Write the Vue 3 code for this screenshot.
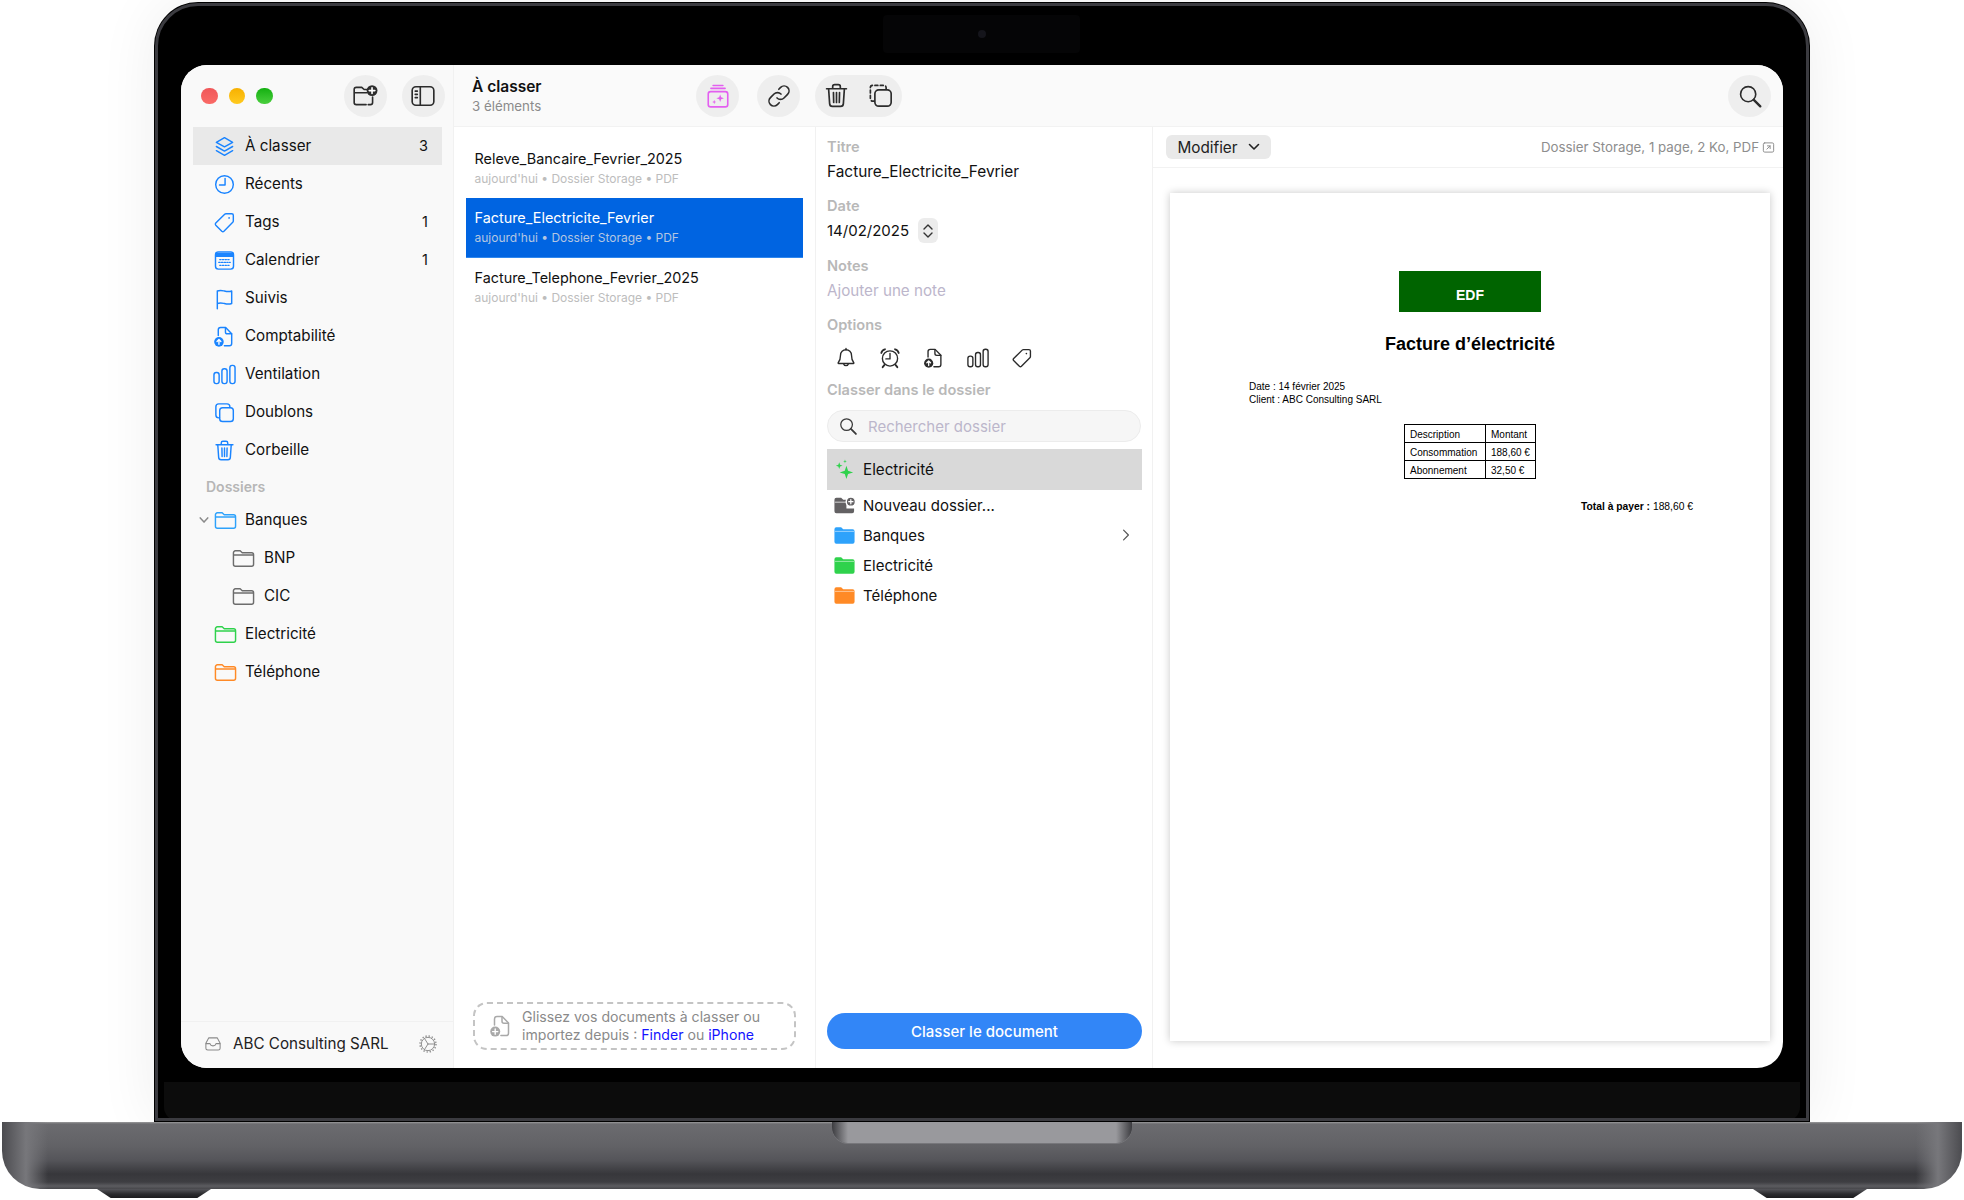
<script setup>
const icons = {
  stack: '<path d="M12 2.8 3.5 7.6l8.5 4.8 8.5-4.8z"/><path d="M3.5 12l8.5 4.8 8.5-4.8"/><path d="M3.5 16.4l8.5 4.8 8.5-4.8"/>',
  clock: '<circle cx="12" cy="12" r="9.2"/><path d="M12.6 5.6v6.9H6.8"/>',
  tag: '<path d="M13.6 2.8h6a1.6 1.6 0 0 1 1.6 1.6v6a2 2 0 0 1-.6 1.4l-9.2 9.3a1.6 1.6 0 0 1-2.2 0l-6.3-6.3a1.6 1.6 0 0 1 0-2.2l9.3-9.2a2 2 0 0 1 1.4-.6z"/><circle cx="16.8" cy="7.2" r=".9" fill="currentColor" stroke="none"/>',
  calendar: '<rect x="2.6" y="3" width="18.8" height="18" rx="3"/><path d="M3 4.5h18v3.2H3z" fill="currentColor"/><path d="M7 11h10M6 14h12M7 17h10" stroke-dasharray="1.4 1.4" stroke-width="1.3"/>',
  flag: '<path d="M4.5 22.6V4.2c3.2-1.2 5.2-.5 7.4 0 2.6.7 5 .9 7.6 0v13c-2.6.9-5 .7-7.6 0-2.2-.5-4.2-1.2-7.4 0"/>',
  docup: '<path d="M5.5 11V5a2.4 2.4 0 0 1 2.4-2.4h5.3l6.3 6.5v10.1a2.4 2.4 0 0 1-2.4 2.4h-5.2"/><path d="M13 2.8v4.4a2 2 0 0 0 2 2h4.4"/><circle cx="6.2" cy="17.6" r="5" fill="currentColor" stroke="none"/><path d="M6.2 20.2v-4.8M4.2 17.2l2-2 2 2" stroke="#fff" stroke-width="1.4"/>',
  bars: '<rect x="1" y="10" width="5.4" height="11.5" rx="2.4"/><rect x="9.3" y="6" width="5.4" height="15.5" rx="2.4"/><rect x="17.6" y="2.5" width="5.4" height="19" rx="2.4"/>',
  copies: '<path d="M6.8 17.6H6a3 3 0 0 1-3-3V6a3 3 0 0 1 3-3h8.6a3 3 0 0 1 3 3v.8"/><rect x="7" y="7" width="14.2" height="14.4" rx="3"/>',
  trash: '<path d="M3.2 6h17.6M8.6 5.6V4.2a1.8 1.8 0 0 1 1.8-1.8h3.2a1.8 1.8 0 0 1 1.8 1.8v1.4"/><path d="M5 6.2l.9 13a2.5 2.5 0 0 0 2.5 2.4h7.2a2.5 2.5 0 0 0 2.5-2.4l.9-13"/><path d="M9.3 9.4l.2 8.8M12 9.4v8.8M14.7 9.4l-.2 8.8"/>',
  folder: '<path d="M1.5 6a2 2 0 0 1 2-2h5l2.2 2h9.8a2 2 0 0 1 2 2v10a2 2 0 0 1-2 2h-17a2 2 0 0 1-2-2z"/><path d="M2 8.4h20"/>',
  folderFill: '<path d="M1.5 5.5a2 2 0 0 1 2-2h5l2.2 2h9.8a2 2 0 0 1 2 2v11a2 2 0 0 1-2 2h-17a2 2 0 0 1-2-2z" fill="currentColor" stroke="none"/><path d="M2.5 7.7h19" stroke="#fff" stroke-opacity=".55" stroke-width="1"/>',
  folderPlus: '<path d="M13 20H4a2 2 0 0 1-2-2V6a2 2 0 0 1 2-2h5l2.2 2H14M19 13v5a2 2 0 0 1-2 2h-2"/><path d="M2.5 9h11"/><circle cx="18.5" cy="7" r="5" fill="currentColor" stroke="none"/><path d="M18.5 4.4v5.2M15.9 7h5.2" stroke="#fff" stroke-width="1.5"/>',
  folderPlusFill: '<path d="M1.5 6a2 2 0 0 1 2-2h5l2.2 2H14v9h8v3a2 2 0 0 1-2 2H3.5a2 2 0 0 1-2-2z" fill="currentColor" stroke="none"/><path d="M2.5 8.600h11" stroke="#fff" stroke-opacity=".5"/><circle cx="18.6" cy="8" r="4.8" fill="currentColor" stroke="#fff"/><path d="M18.6 5.800v4.400M16.400 8h4.400" stroke="#fff" stroke-width="1.3"/>',
  panel: '<rect x="2" y="3.5" width="20" height="17" rx="3.5"/><path d="M9.5 3.5v17"/><path d="M4.8 7.5h2M4.8 10.5h2M4.8 13.5h2" stroke-width="1.4"/>',
  inbox: '<path d="M6.4 3.8h11.2L21.5 11v6.5a2.5 2.5 0 0 1-2.5 2.5H5a2.5 2.5 0 0 1-2.5-2.5V11z"/><path d="M2.8 11.5H8c.5 2 2 3 4 3s3.5-1 4-3h5.2"/>',
  gear: '<circle cx="12" cy="12" r="8"/><circle cx="12" cy="12" r="9.6" stroke-width="1.8" stroke-linecap="butt" stroke-dasharray="1.6 2.2"/><path d="M12 12 8 5.7M12 12l-4 6.300M12 12h8"/>',
  search: '<circle cx="10.3" cy="10.3" r="7"/><path d="M15.5 15.5l6 6" stroke-width="2.2"/>',
  link: '<path d="M10.2 13.8a4.5 4.5 0 0 0 6.4 0l3.3-3.3a4.5 4.5 0 0 0-6.4-6.4l-1.7 1.7"/><path d="M13.8 10.2a4.5 4.5 0 0 0-6.4 0l-3.3 3.3a4.5 4.5 0 0 0 6.4 6.4l1.7-1.7"/>',
  dup: '<path d="M6.5 17H5a2 2 0 0 1-2-2V5a2 2 0 0 1 2-2h10a2 2 0 0 1 2 2v1.500" stroke-dasharray="2.6 2.2"/><rect x="7" y="7" width="14.5" height="14.5" rx="3.5"/>',
  magic: '<rect x="3" y="8" width="18" height="14" rx="2.2"/><path d="M5.5 5h13M7.5 2.3h9"/><path d="M14 10.5l.9 2.6 2.6.9-2.6.9-.9 2.6-.9-2.6-2.6-.9 2.6-.9z" fill="currentColor" stroke="none"/><path d="M8.5 15.5l.5 1.5 1.500.5-1.500.5-.5 1.500-.5-1.500-1.500-.5 1.500-.5z" fill="currentColor" stroke="none"/>',
  sparkle: '<path d="M14 8l1.700 5.300L21 15l-5.300 1.700L14 22l-1.700-5.300L7 15l5.300-1.700z" fill="currentColor" stroke="none"/><path d="M6.500 4.500l.9 2.600 2.600.9-2.600.9-.9 2.600-.9-2.600L3 8l2.600-.9z" fill="currentColor" stroke="none"/><path d="M12.500 1.500l.5 1.500 1.500.5-1.500.5-.5 1.500-.5-1.500-1.500-.5 1.500-.5z" fill="currentColor" stroke="none"/>',
  bell: '<path d="M12 3a6 6 0 0 0-6 6c0 4.500-1 6.500-2.500 8.200-.3.400 0 .8.400.8h16.200c.4 0 .7-.4.400-.8C19 15.500 18 13.500 18 9a6 6 0 0 0-6-6z"/><path d="M12 1.500V3M9.500 18.500a2.600 2.600 0 0 0 5 0"/>',
  alarm: '<circle cx="12" cy="12.500" r="8.300"/><path d="M12 7v6H7.500"/><path d="M2.500 6.500C3 4.500 4.500 3 6.500 2.500M21.500 6.500C21 4.500 19.500 3 17.500 2.500M6 19.500l-2 2.500M18 19.500l2 2.500" stroke-width="2"/>',
  docplus: '<path d="M5.500 11V5a2.400 2.400 0 0 1 2.400-2.400h5.300l6.300 6.500v10.100a2.400 2.400 0 0 1-2.400 2.400h-5.200"/><path d="M13 2.800v4.400a2 2 0 0 0 2 2h4.400"/><circle cx="6.200" cy="17.600" r="5" fill="currentColor" stroke="none"/><path d="M6.200 15v5.200M3.600 17.600h5.200" stroke="#fff" stroke-width="1.400"/>',
  ext: '<rect x="2.500" y="3.500" width="19" height="17" rx="2.500"/><path d="M9 15l6-6M10 9h5v5"/>'
}

const navItems = [
  { label: 'À classer', icon: 'stack', count: 3, active: true },
  { label: 'Récents', icon: 'clock' },
  { label: 'Tags', icon: 'tag', count: 1 },
  { label: 'Calendrier', icon: 'calendar', count: 1 },
  { label: 'Suivis', icon: 'flag' },
  { label: 'Comptabilité', icon: 'docup' },
  { label: 'Ventilation', icon: 'bars' },
  { label: 'Doublons', icon: 'copies' },
  { label: 'Corbeille', icon: 'trash' }
]

const sideFolders = [
  { label: 'Banques', color: 'sky', open: true },
  { label: 'BNP', color: 'grey', sub: true },
  { label: 'CIC', color: 'grey', sub: true },
  { label: 'Electricité', color: 'green' },
  { label: 'Téléphone', color: 'orange' }
]

const docs = [
  { name: 'Releve_Bancaire_Fevrier_2025' },
  { name: 'Facture_Electricite_Fevrier', selected: true },
  { name: 'Facture_Telephone_Fevrier_2025' }
]

const optionIcons = ['bell', 'alarm', 'docup', 'bars', 'tag']

const targets = [
  { label: 'Nouveau dossier...', icon: 'folderPlusFill', color: 'slate' },
  { label: 'Banques', icon: 'folderFill', color: 'sky', more: true },
  { label: 'Electricité', icon: 'folderFill', color: 'green' },
  { label: 'Téléphone', icon: 'folderFill', color: 'orange' }
]
</script>

<template>
  <div class="stage">
    <div class="lid">
      <div class="notch"><span class="camera"></span></div>
      <div class="screen">
        <aside class="sidebar">
          <div class="side-top">
            <span class="light red"></span>
            <span class="light yellow"></span>
            <span class="light lime"></span>
            <button class="round first"><svg class="ic" viewBox="0 0 24 24" v-html="icons.folderPlus"></svg></button>
            <button class="round"><svg class="ic" viewBox="0 0 24 24" v-html="icons.panel"></svg></button>
          </div>
          <nav class="nav">
            <div v-for="item in navItems" :key="item.label" class="nav-row" :class="{ active: item.active }">
              <span class="caret"></span>
              <svg class="ic nav-ic blue" :class="{ wide: item.icon === 'bars' }" viewBox="0 0 24 24" v-html="icons[item.icon]"></svg>
              <span class="nav-label">{{ item.label }}</span>
              <span v-if="item.count" class="count">{{ item.count }}</span>
            </div>
            <div class="nav-title">Dossiers</div>
            <div v-for="f in sideFolders" :key="f.label" class="nav-row">
              <span class="caret">
                <svg v-if="f.open" class="caret-ic" viewBox="0 0 12 12"><path d="M1.5 3.5 6 8.5l4.5-5" /></svg>
              </span>
              <svg class="ic nav-ic" :class="[f.color, f.sub ? 'sub' : 'top']" viewBox="0 0 24 24" v-html="icons.folder"></svg>
              <span class="nav-label">{{ f.label }}</span>
            </div>
          </nav>
          <div class="side-foot">
            <svg class="ic foot-ic" viewBox="0 0 24 24" v-html="icons.inbox"></svg>
            <span class="foot-name">ABC Consulting SARL</span>
            <svg class="ic gear" viewBox="0 0 24 24" v-html="icons.gear"></svg>
          </div>
        </aside>

        <div class="main">
          <header class="topbar">
            <div class="heading">
              <div class="heading-title">À classer</div>
              <div class="heading-sub">3 éléments</div>
            </div>
            <button class="round magic"><svg class="ic" viewBox="0 0 24 24" v-html="icons.magic"></svg></button>
            <button class="round link-btn"><svg class="ic" viewBox="0 0 24 24" v-html="icons.link"></svg></button>
            <div class="pill">
              <svg class="ic" viewBox="0 0 24 24" v-html="icons.trash"></svg>
              <svg class="ic" viewBox="0 0 24 24" v-html="icons.dup"></svg>
            </div>
            <button class="round search-btn"><svg class="ic" viewBox="0 0 24 24" v-html="icons.search"></svg></button>
          </header>

          <div class="columns">
            <section class="list">
              <div v-for="doc in docs" :key="doc.name" class="doc" :class="{ selected: doc.selected }">
                <div class="doc-name">{{ doc.name }}</div>
                <div class="doc-sub">aujourd'hui • Dossier Storage • PDF</div>
              </div>
              <div class="drop">
                <svg class="ic drop-ic" viewBox="0 0 24 24" v-html="icons.docplus"></svg>
                <p>Glissez vos documents à classer ou<br />importez depuis : <a>Finder</a> ou <a>iPhone</a></p>
              </div>
            </section>

            <section class="detail">
              <div class="label first-label">Titre</div>
              <div class="value">Facture_Electricite_Fevrier</div>
              <div class="label date-label">Date</div>
              <div class="date-row">
                <span>14/02/2025</span>
                <span class="stepper">
                  <svg viewBox="0 0 12 18"><path d="M2 7l4-4 4 4M2 11l4 4 4-4" /></svg>
                </span>
              </div>
              <div class="label notes-label">Notes</div>
              <div class="value placeholder">Ajouter une note</div>
              <div class="label options-label">Options</div>
              <div class="options">
                <svg v-for="o in optionIcons" :key="o" class="ic opt-ic" viewBox="0 0 24 24" v-html="icons[o]"></svg>
              </div>
              <div class="label file-label">Classer dans le dossier</div>
              <div class="search-box">
                <svg class="ic" viewBox="0 0 24 24" v-html="icons.search"></svg>
                <span>Rechercher dossier</span>
              </div>
              <div class="suggest">
                <svg class="ic target-ic green" viewBox="0 0 24 24" v-html="icons.sparkle"></svg>
                <span>Electricité</span>
              </div>
              <div v-for="t in targets" :key="t.label" class="target">
                <svg class="ic target-ic" :class="t.color" viewBox="0 0 24 24" v-html="icons[t.icon]"></svg>
                <span>{{ t.label }}</span>
                <svg v-if="t.more" class="more" viewBox="0 0 10 16"><path d="M2 2l6 6-6 6" /></svg>
              </div>
              <button class="submit">Classer le document</button>
            </section>

            <section class="preview">
              <div class="preview-bar">
                <button class="modifier">
                  Modifier
                  <svg viewBox="0 0 12 8"><path d="M1.5 1.5 6 6l4.5-4.5" /></svg>
                </button>
                <span class="meta">Dossier Storage, 1 page, 2 Ko, PDF</span>
                <svg class="ic ext" viewBox="0 0 24 24" v-html="icons.ext"></svg>
              </div>
              <div class="paper-wrap">
                <div class="paper">
                  <div class="edf">EDF</div>
                  <h1>Facture d’électricité</h1>
                  <p class="client">Date : 14 février 2025<br />Client : ABC Consulting SARL</p>
                  <table>
                    <tbody>
                      <tr><td>Description</td><td>Montant</td></tr>
                      <tr><td>Consommation</td><td>188,60 €</td></tr>
                      <tr><td>Abonnement</td><td>32,50 €</td></tr>
                    </tbody>
                  </table>
                  <p class="total"><b>Total à payer :</b> 188,60 €</p>
                </div>
              </div>
            </section>
          </div>
        </div>
      </div>
      <div class="chin"></div>
    </div>
    <div class="base">
      <div class="thumb"></div>
      <div class="foot left"></div>
      <div class="foot right"></div>
    </div>
  </div>
</template>

<style>
html, body {
  margin: 0;
  background: #fff;
  overflow: hidden;
}
</style>

<style scoped>
.stage {
  width: 1964px;
  height: 1200px;
  padding-top: 2px;
  box-sizing: border-box;
  display: flex;
  flex-direction: column;
  align-items: center;
  font-family: Inter, "Liberation Sans", sans-serif;
  color: #111;
  overflow: hidden;
}

.ic {
  display: block;
  fill: none;
  stroke: currentColor;
  stroke-width: 1.5;
  stroke-linecap: round;
  stroke-linejoin: round;
  overflow: visible;
}

.blue { color: #1a84ff; }
.sky { color: #2ea2fb; }
.grey { color: #6d6d6d; }
.green { color: #2fd24c; }
.orange { color: #ff8a26; }
.slate { color: #636163; }

button {
  font-family: inherit;
  border: none;
  padding: 0;
}

/* laptop shell */
.lid {
  position: relative;
  width: 1656px;
  height: 1120px;
  box-sizing: border-box;
  border: 8px solid #000;
  border-bottom: none;
  border-radius: 44px 44px 0 0;
  background: #000;
  box-shadow: 0 0 60px rgba(0, 0, 0, 0.07);
  outline: 3px solid #3b3b40;
  outline-offset: -4px;
  padding-top: 55px;
  display: flex;
  flex-direction: column;
}

.notch {
  position: absolute;
  top: 5px;
  left: 721px;
  width: 197px;
  height: 38px;
  border-radius: 4px;
  background: #050506;
  display: flex;
  align-items: center;
  justify-content: center;
}

.camera {
  width: 8px;
  height: 8px;
  border-radius: 50%;
  background: #15151b;
}

.screen {
  height: 1003px;
  margin: 0 19px;
  border-radius: 26px;
  overflow: hidden;
  display: flex;
  background: #fff;
  flex: none;
}

.chin {
  flex: 1;
  margin: 14px 2px 1px;
  background: #0c0c0c;
  border-radius: 0 0 14px 14px;
}

.base {
  position: relative;
  width: 1960px;
  height: 67px;
  flex: none;
  border-radius: 0 0 38px 38px;
  background:
    linear-gradient(90deg, #4c4c50 0, #77777b 24px, rgba(90, 90, 94, 0) 46px, rgba(90, 90, 94, 0) 1914px, #77777b 1936px, #4c4c50 100%),
    linear-gradient(180deg, #9a9a9c 0, #6b6b6f 2px, #626266 24px, #55555a 38px, #37373b 52px, #3e3e42 60px, #5c5c60 64px, #47474b 100%);
}

.thumb {
  position: absolute;
  top: 0;
  left: 830px;
  width: 300px;
  height: 21px;
  border-radius: 0 0 16px 16px;
  background: linear-gradient(90deg, #3c3c40 0, #99999d 16px, #99999d 284px, #3c3c40 100%);
  box-shadow: 0 1px 0 #77777b;
}

.foot {
  position: absolute;
  top: 67px;
  width: 114px;
  height: 9px;
  background: linear-gradient(180deg, #55555a 0, #2b2b2e 55%, #1b1b1d 100%);
  clip-path: polygon(0 0, 100% 0, 88% 100%, 12% 100%);
}

.foot.left { left: 95px; }
.foot.right { left: 1751px; }

/* sidebar */
.sidebar {
  width: 273px;
  flex: none;
  box-sizing: border-box;
  background: #f9f9f9;
  border-right: 1px solid #f1f1f1;
  display: flex;
  flex-direction: column;
}

.side-top {
  height: 62px;
  flex: none;
  padding-left: 20px;
  display: flex;
  align-items: center;
}

.light {
  width: 16.5px;
  height: 16.5px;
  border-radius: 50%;
  margin-right: 11px;
}

.red { background: linear-gradient(180deg, #f0575a, #fa6a66); }
.yellow { background: linear-gradient(180deg, #f7b000, #ffca1f); }
.lime { background: linear-gradient(180deg, #14b011, #4bcf3e); }

.round {
  width: 43px;
  height: 42px;
  border-radius: 50%;
  background: #eeeeee;
  color: #2c2c2c;
  display: flex;
  align-items: center;
  justify-content: center;
  flex: none;
}

.round .ic {
  width: 26px;
  height: 26px;
}

.first {
  margin-left: 60px;
  margin-right: 15px;
}

.nav {
  padding: 0 11px 0 12px;
}

.nav-row {
  height: 38px;
  display: flex;
  align-items: center;
  padding: 0 14px 0 6px;
  font-size: 15.2px;
  line-height: 38px;
}

.nav-row.active {
  background: #e9e9e9;
}

.caret {
  width: 15px;
  flex: none;
  display: flex;
  align-items: center;
}

.caret-ic {
  width: 10px;
  height: 10px;
  fill: none;
  stroke: #8a8a8a;
  stroke-width: 1.8;
  stroke-linecap: round;
  stroke-linejoin: round;
}

.nav-ic {
  width: 23px;
  height: 23px;
  margin-left: -1px;
  margin-right: 9px;
  flex: none;
}

.nav-ic.wide {
  width: 25px;
  margin-left: -2px;
  margin-right: 8px;
}

.nav-ic.top {
  margin-left: 0;
  margin-right: 8px;
}

.nav-ic.sub {
  margin-left: 18px;
}

.nav-label {
  flex: 1;
}

.count {
  font-size: 14.5px;
}

.nav-title {
  height: 32px;
  padding: 4px 0 0 13px;
  box-sizing: border-box;
  font-size: 14px;
  line-height: 28px;
  font-weight: 600;
  color: #b6b6b6;
}

.side-foot {
  margin-top: auto;
  height: 47px;
  box-sizing: border-box;
  border-top: 1px solid #f1f1f1;
  padding: 0 15px 3px 23px;
  display: flex;
  align-items: center;
  font-size: 15.2px;
}

.foot-ic {
  width: 18px;
  height: 18px;
  margin-right: 11px;
  color: #8a8a8a;
  stroke-width: 1.4;
}

.foot-name {
  flex: 1;
  white-space: nowrap;
  color: #222;
}

.gear {
  width: 20px;
  height: 20px;
  color: #8f8f8f;
  stroke-width: 1.2;
}

/* top bar */
.main {
  flex: 1;
  min-width: 0;
  display: flex;
  flex-direction: column;
}

.topbar {
  height: 62px;
  flex: none;
  box-sizing: border-box;
  background: #fafafa;
  border-bottom: 1px solid #f2f2f2;
  padding: 0 12px 0 18px;
  display: flex;
  align-items: center;
}

.heading {
  width: 224px;
  flex: none;
}

.heading-title {
  font-size: 15.5px;
  line-height: 20px;
  font-weight: 600;
  margin-top: 1px;
}

.heading-sub {
  font-size: 13.3px;
  line-height: 18px;
  color: #8b8b8b;
}

.magic { color: #e35ff0; }
.link-btn { margin-left: 18px; }

.pill {
  width: 87px;
  height: 42px;
  margin-left: 15px;
  border-radius: 21px;
  background: #eeeeee;
  color: #2c2c2c;
  display: flex;
  align-items: center;
  justify-content: center;
  gap: 17px;
}

.pill .ic {
  width: 27px;
  height: 27px;
}

.search-btn { margin-left: auto; }

/* columns */
.columns {
  flex: 1;
  min-height: 0;
  display: flex;
}

.list {
  width: 362px;
  flex: none;
  box-sizing: border-box;
  border-right: 1px solid #f1f1f1;
  padding: 11px 12px 18px;
  display: flex;
  flex-direction: column;
}

.doc {
  height: 60px;
  flex: none;
  box-sizing: border-box;
  padding: 10px 0 0 8.5px;
}

.doc:first-child {
  padding-top: 11px;
}

.doc-name {
  font-size: 14.4px;
  line-height: 20px;
}

.doc-sub {
  font-size: 12px;
  line-height: 20px;
  color: #bdbdbd;
}

.doc.selected {
  background: #0064e1;
  border-bottom: 1px solid #2f87ee;
  color: #fff;
}

.doc.selected .doc-sub {
  color: #b4c6e2;
}

.drop {
  margin: auto 7px 0;
  height: 48px;
  box-sizing: border-box;
  border: 2px dashed #c4c4c4;
  border-radius: 14px;
  display: flex;
  align-items: center;
  padding-left: 14px;
}

.drop-ic {
  width: 24px;
  height: 24px;
  margin-right: 9px;
  color: #a9a9a9;
  flex: none;
}

.drop p {
  margin: 0;
  font-size: 14.1px;
  line-height: 18px;
  color: #8a8a8a;
  white-space: nowrap;
}

.drop a {
  color: #1414ff;
}

/* detail */
.detail {
  width: 337px;
  flex: none;
  box-sizing: border-box;
  border-right: 1px solid #f1f1f1;
  padding: 0 10px 19px 11px;
  display: flex;
  flex-direction: column;
}

.label {
  font-size: 14.6px;
  line-height: 20px;
  font-weight: 600;
  color: #b8b8b8;
}

.first-label { margin-top: 10px; }
.date-label { margin-top: 13px; }
.notes-label { margin-top: 13px; }
.options-label { margin-top: 13px; }
.file-label { margin-top: 9px; }

.value {
  margin-top: 4px;
  font-size: 15.4px;
  line-height: 22px;
}

.placeholder {
  font-size: 15.2px;
  color: #bcb6cb;
}

.date-row {
  margin-top: 2px;
  height: 25px;
  display: flex;
  align-items: center;
  gap: 9px;
  font-size: 15px;
}

.stepper {
  width: 20px;
  height: 25px;
  border-radius: 6px;
  background: #ececec;
  display: flex;
  align-items: center;
  justify-content: center;
}

.stepper svg {
  width: 12px;
  height: 18px;
  fill: none;
  stroke: #333;
  stroke-width: 1.4;
  stroke-linecap: round;
  stroke-linejoin: round;
}

.options {
  margin-top: 12px;
  height: 24px;
  padding-left: 7px;
  display: flex;
  gap: 20px;
}

.opt-ic {
  width: 24px;
  height: 22px;
  color: #2b2b2b;
}

.search-box {
  margin-top: 10px;
  margin-right: 1px;
  height: 32px;
  box-sizing: border-box;
  border: 1px solid #ececec;
  border-radius: 16px;
  background: #f6f6f6;
  padding-left: 10px;
  display: flex;
  align-items: center;
  gap: 10px;
  font-size: 15px;
  color: #bcb6cb;
}

.search-box .ic {
  width: 20px;
  height: 20px;
  color: #3a3a3a;
}

.suggest {
  margin-top: 7px;
  height: 41px;
  flex: none;
  background: #d9d9d9;
  padding-left: 6px;
  display: flex;
  align-items: center;
  font-size: 15.2px;
}

.target-ic {
  width: 23px;
  height: 23px;
  margin-right: 7px;
  flex: none;
}

.target {
  height: 30px;
  flex: none;
  padding-left: 6px;
  display: flex;
  align-items: center;
  font-size: 15px;
}

.more {
  width: 8px;
  height: 14px;
  margin-left: auto;
  margin-right: 12px;
  fill: none;
  stroke: #555;
  stroke-width: 1.5;
  stroke-linecap: round;
  stroke-linejoin: round;
}

.submit {
  margin-top: auto;
  height: 36px;
  border-radius: 18px;
  background: #3286f7;
  color: #fff;
  font-size: 15px;
  font-weight: 500;
}

/* preview */
.preview {
  flex: 1;
  min-width: 0;
  display: flex;
  flex-direction: column;
}

.preview-bar {
  height: 41px;
  flex: none;
  box-sizing: border-box;
  border-bottom: 1px solid #f2f2f2;
  padding: 0 8px 0 13px;
  display: flex;
  align-items: center;
}

.modifier {
  width: 105px;
  height: 24px;
  border-radius: 6px;
  background: #e9e9e9;
  color: #222;
  font-size: 15.3px;
  display: flex;
  align-items: center;
  justify-content: center;
  gap: 10px;
}

.modifier svg {
  width: 12px;
  height: 8px;
  fill: none;
  stroke: #222;
  stroke-width: 1.6;
  stroke-linecap: round;
  stroke-linejoin: round;
}

.meta {
  margin-left: auto;
  font-size: 13.3px;
  color: #8d8d8d;
}

.ext {
  width: 13px;
  height: 13px;
  margin-left: 3px;
  color: #8d8d8d;
  stroke-width: 1.8;
}

.paper-wrap {
  flex: 1;
  min-height: 0;
  padding: 25px 13px 27px 17px;
  display: flex;
}

.paper {
  flex: 1;
  background: #fff;
  box-shadow: 0 0 8px rgba(0, 0, 0, 0.22);
  padding-top: 78px;
  font-family: "Liberation Sans", Arial, sans-serif;
  color: #000;
}

.edf {
  width: 142px;
  height: 41px;
  box-sizing: border-box;
  margin: 0 auto;
  padding-top: 15px;
  background: #006400;
  color: #fff;
  font-size: 14px;
  line-height: 18px;
  font-weight: 700;
  text-align: center;
}

h1 {
  margin: 21px 0 0;
  font-size: 18px;
  line-height: 22px;
  font-weight: 700;
  text-align: center;
}

.client {
  margin: 25px 0 0 79px;
  font-size: 10px;
  line-height: 13px;
}

table {
  margin: 18px auto 0;
  width: 132px;
  height: 55px;
  border-collapse: collapse;
  font-size: 10px;
  table-layout: fixed;
}

td {
  border: 1px solid #000;
  padding: 1px 5px 0;
  white-space: nowrap;
}

td:first-child {
  width: 70px;
}

.total {
  margin: 22px 77px 0 0;
  text-align: right;
  font-size: 10.3px;
  line-height: 12px;
}
</style>
